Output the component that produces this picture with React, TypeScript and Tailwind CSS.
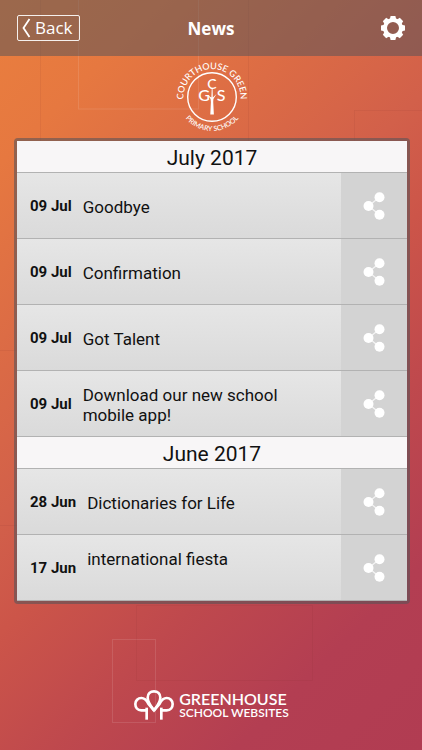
type NewsItem = {
  date: string
  title: string
  multiline?: boolean
}

type NewsGroup = {
  month: string
  items: NewsItem[]
}

const groups: NewsGroup[] = [
  {
    month: "July 2017",
    items: [
      { date: "09 Jul", title: "Goodbye" },
      { date: "09 Jul", title: "Confirmation" },
      { date: "09 Jul", title: "Got Talent" },
      { date: "09 Jul", title: "Download our new school mobile app!" },
    ],
  },
  {
    month: "June 2017",
    items: [
      { date: "28 Jun", title: "Dictionaries for Life" },
      { date: "17 Jun", title: "international fiesta", multiline: true },
    ],
  },
]

const teeth = [0, 45, 90, 135, 180, 225, 270, 315]

const GearIcon = () => (
  <svg viewBox="-12 -12 24 24" className="size-6" aria-hidden="true">
    <circle r="8" fill="none" stroke="#fff" strokeWidth="4" />
    {teeth.map((angle) => (
      <path
        key={angle}
        d="M-3.2 -8.5 L-2.4 -12 H2.4 L3.2 -8.5 Z"
        fill="#fff"
        transform={`rotate(${angle})`}
      />
    ))}
  </svg>
)

const ShareIcon = () => (
  <svg viewBox="0 0 22 28" className="h-7 w-[22px]" aria-hidden="true">
    <path d="M16.5 5.3 5.5 14l11 8.7" fill="none" stroke="#f4f4f4" strokeWidth="1.3" />
    <g fill="#fff">
      <circle cx="16.5" cy="5.3" r="5" />
      <circle cx="5.5" cy="14" r="5" />
      <circle cx="16.5" cy="22.7" r="5" />
    </g>
  </svg>
)

const SchoolLogo = () => (
  <svg
    viewBox="-37 -37 74 74"
    className="size-[74px] font-[Lato,sans-serif] font-medium"
    fill="#fff"
    role="img"
    aria-label="Courthouse Green Primary School"
  >
    <defs>
      <path id="crest-top" d="M-28.5 3 A28.6 28.6 0 1 1 28.5 3" />
      <path id="crest-bottom" d="M-34 0 A34 34 0 0 0 34 0" />
    </defs>
    <circle r="24.3" fill="none" stroke="#fff" strokeWidth="1.4" />
    <text fontSize="9" textAnchor="middle">
      <textPath href="#crest-top" startOffset="50%">
        COURTHOUSE GREEN
      </textPath>
    </text>
    <text fontSize="7" textAnchor="middle">
      <textPath href="#crest-bottom" startOffset="50%">
        PRIMARY SCHOOL
      </textPath>
    </text>
    <g textAnchor="middle">
      <text x="0" y="-8" fontSize="14">C</text>
      <text x="-8" y="4" fontSize="16">G</text>
      <text x="9" y="4" fontSize="16">S</text>
    </g>
    <path d="M-1.7 17.5 L-1.1 5 -1.4 2 -4.5 -2 -0.6 0.4 -0.3 -8 0.6 -8 0.8 0.4 4.5 -3 1.4 2 1.2 5 1.9 17.5Z" />
  </svg>
)

const TreesIcon = () => (
  <svg viewBox="44 40 126 96" className="h-8 w-[42px]" aria-hidden="true">
    <g fill="none" stroke="#fff" strokeWidth="8">
      <path d="M85 132V96" />
      <path d="M129 132V96" />
      <path d="M85 104H69C57 104 51 95 51 85S59 67 69 67C80 67 85 74 90 84L107 104" />
      <path d="M129 104H145C157 104 163 95 163 85S155 67 145 67C134 67 129 74 124 84L107 104" />
      <path d="M107 104C98 92 88 80 88 66C88 54 96 47 107 47S126 54 126 66C126 80 116 92 107 104Z" />
    </g>
  </svg>
)

const Backdrop = () => (
  <svg
    viewBox="0 0 422 750"
    preserveAspectRatio="xMidYMid slice"
    className="absolute inset-0 -z-10 h-full w-full"
    fill="none"
    aria-hidden="true"
  >
    <g stroke="#fff" strokeOpacity="0.11">
      <rect x="78.5" y="-1" width="120" height="110" />
      <rect x="112.5" y="639.5" width="43" height="83" />
    </g>
    <g stroke="#70202a" strokeOpacity="0.08">
      <path d="M40.5 0V350.5H0" />
      <path d="M248.5 0V141" />
      <path d="M422 110.5H354.5V300" />
      <path d="M0 525.5H60" />
      <rect x="136.5" y="605.5" width="176" height="75" />
    </g>
  </svg>
)

const NewsRow = ({ item }: { item: NewsItem }) => (
  <li className="flex h-[66px] border-b border-[#b2b2b2]">
    <div className="flex flex-1 items-center bg-linear-to-b from-[#e6e6e6] to-[#dadada] pt-0.5 pr-10 pl-[13px]">
      <time className="mr-[11px] shrink-0 text-[15px] font-bold">{item.date}</time>
      <a
        href="#article"
        className={item.multiline ? "min-h-10 text-[17px] leading-5" : "text-[17px] leading-5"}
      >
        {item.title}
      </a>
    </div>
    <button
      aria-label={`Share ${item.title}`}
      className="flex w-[66px] shrink-0 items-center justify-center bg-[#d3d3d3]"
    >
      <ShareIcon />
    </button>
  </li>
)

const App = () => {
  return (
    <div className="relative isolate flex min-h-screen flex-col overflow-hidden bg-[linear-gradient(135deg,#ea7f3e_0%,#e67840_14%,#d2604a_44%,#cc5549_54%,#bf494d_68%,#b33e52_84%,#b13c52_100%)] text-[#111]">
      <Backdrop />
      <header className="grid h-14 grid-cols-3 items-center bg-[#4e5259]/50 px-[17px] font-['Open_Sans',sans-serif] text-white">
        <button className="flex h-[26px] w-[63px] items-center gap-1 rounded-xs border border-white/90 pl-1 text-[17px] leading-6">
          <svg viewBox="0 0 9 20" className="h-5 w-[9px]" aria-hidden="true">
            <path d="M7.5 1 1.5 10l6 9" fill="none" stroke="#fff" strokeWidth="1.8" />
          </svg>
          Back
        </button>
        <h1 className="pt-0.5 text-center text-[17px] font-bold">News</h1>
        <button aria-label="Settings" className="justify-self-end">
          <GearIcon />
        </button>
      </header>

      <main className="flex flex-col items-center pt-1 pr-3 pl-[14px] font-[Roboto,sans-serif]">
        <SchoolLogo />
        <div className="mt-1 w-full rounded-sm border-3 border-[#5a5458]/60 bg-clip-padding">
          {groups.map((group) => (
            <section key={group.month}>
              <h2 className="h-8 border-b border-[#b2b2b2] bg-[#f8f6f7] pt-px text-center text-[21px] leading-8">
                {group.month}
              </h2>
              <ul>
                {group.items.map((item) => (
                  <NewsRow key={item.title} item={item} />
                ))}
              </ul>
            </section>
          ))}
        </div>
      </main>

      <footer className="mt-auto flex items-center justify-center gap-1 pt-8 pb-[29px] font-[Lato,sans-serif] text-white">
        <TreesIcon />
        <div className="font-semibold">
          <p className="text-[16px] leading-4">GREENHOUSE</p>
          <p className="text-[12px] leading-3">SCHOOL WEBSITES</p>
        </div>
      </footer>
    </div>
  )
}

export default App
